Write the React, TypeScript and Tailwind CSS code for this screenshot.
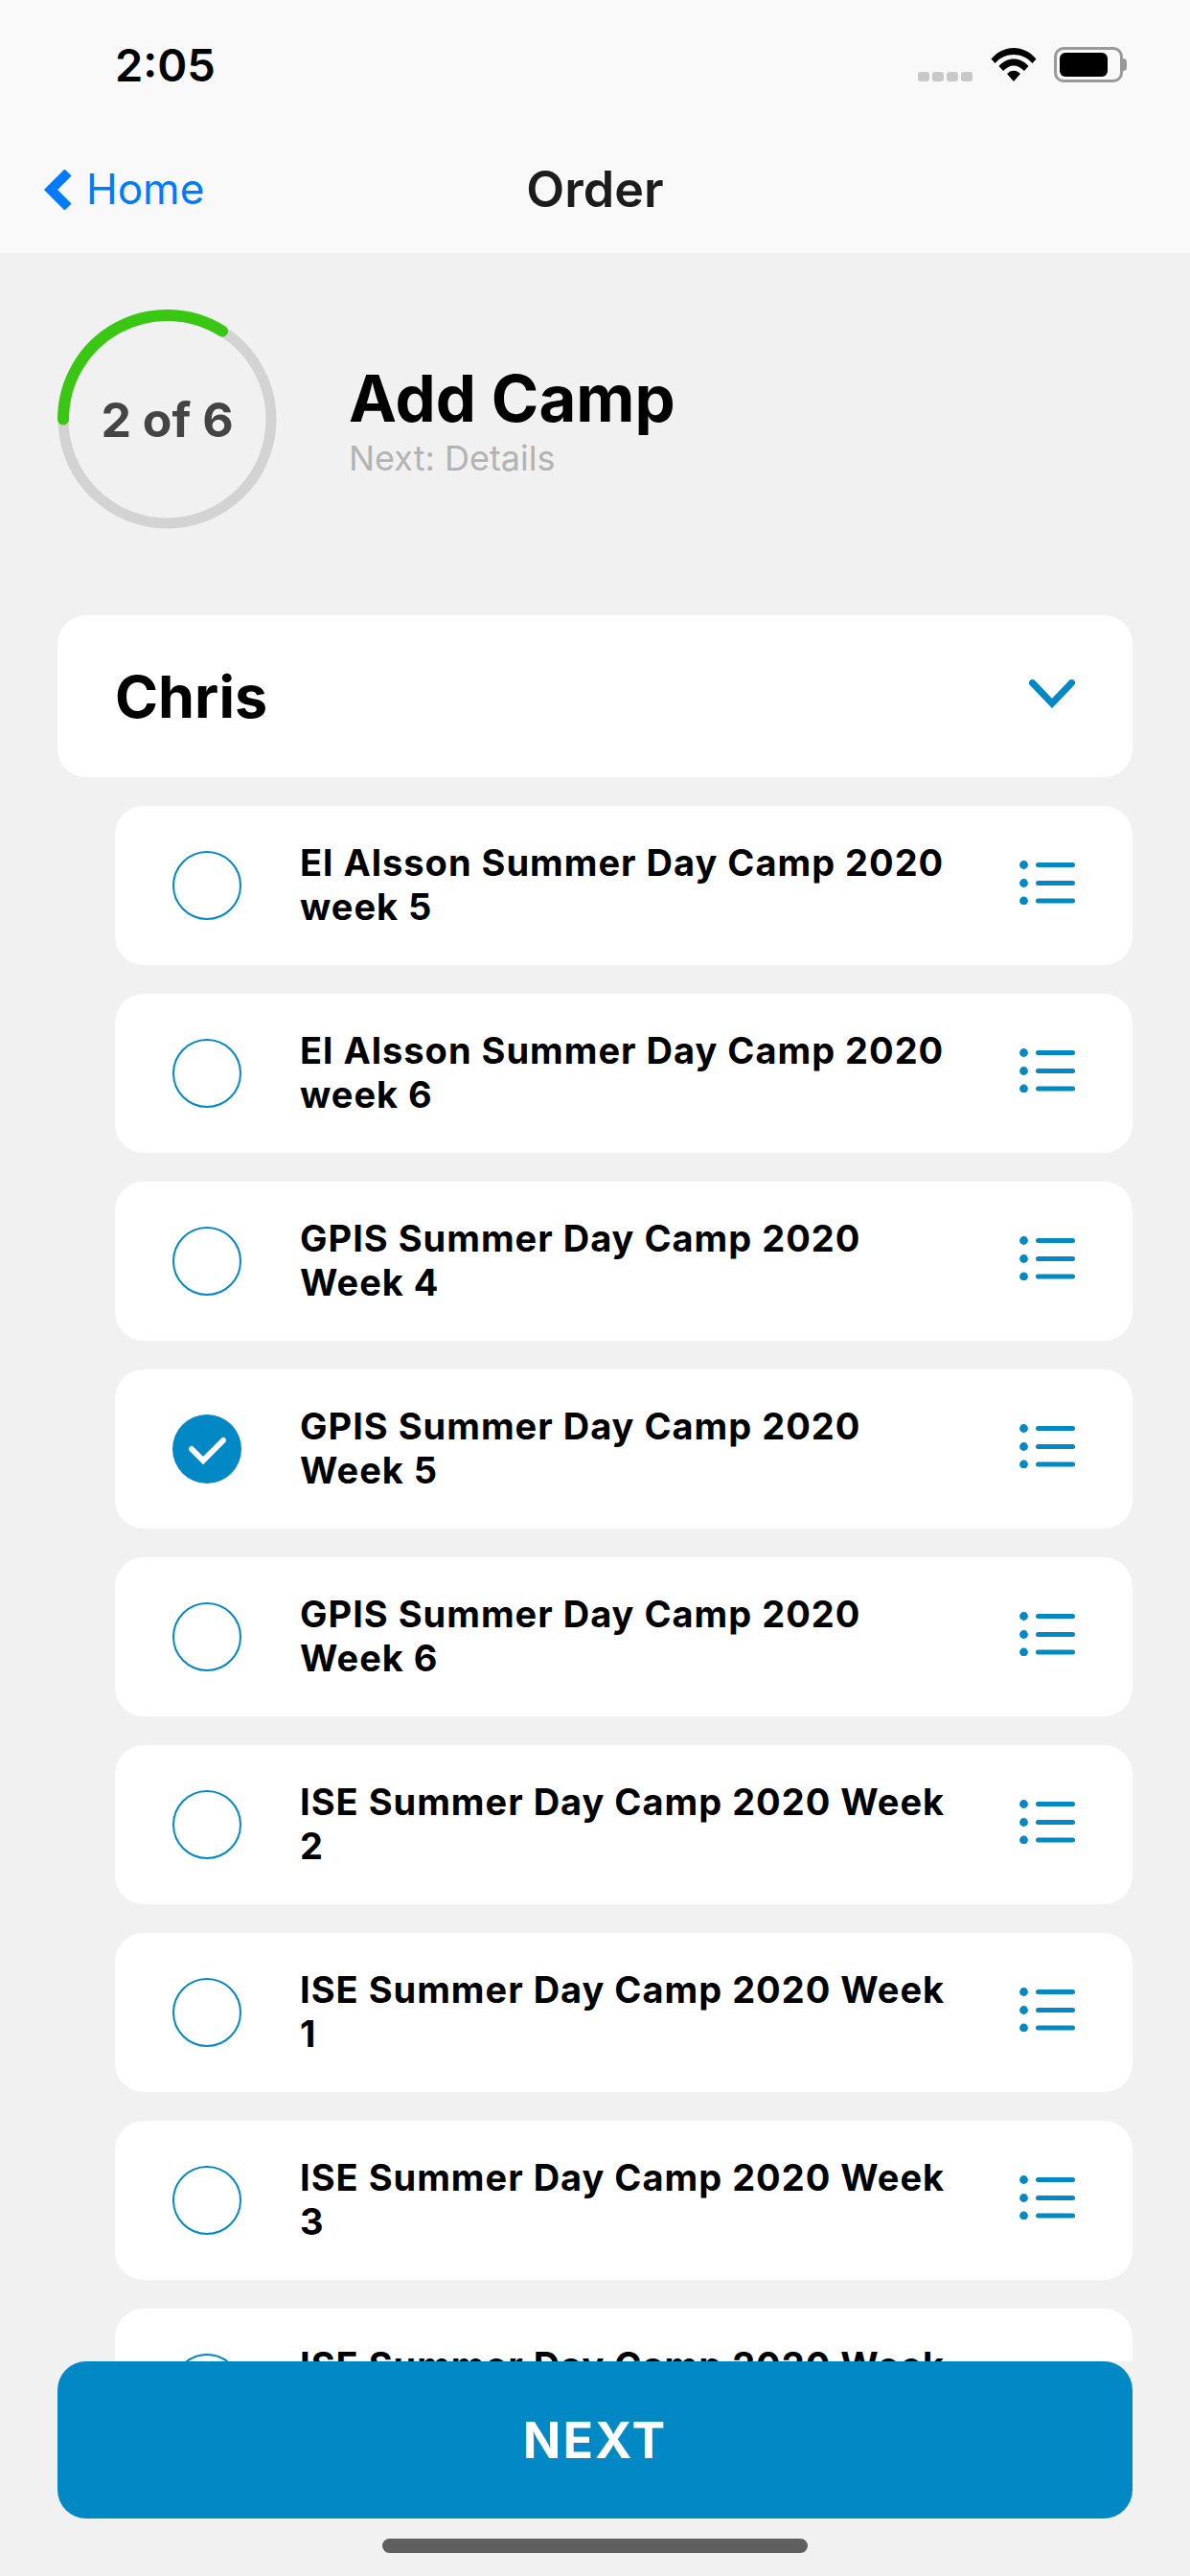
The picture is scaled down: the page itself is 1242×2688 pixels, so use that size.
const items = [
  ["El Alsson Summer Day Camp 2020", "week 5", false],
  ["El Alsson Summer Day Camp 2020", "week 6", false],
  ["GPIS Summer Day Camp 2020", "Week 4", false],
  ["GPIS Summer Day Camp 2020", "Week 5", true],
  ["GPIS Summer Day Camp 2020", "Week 6", false],
  ["ISE Summer Day Camp 2020 Week", "2", false],
  ["ISE Summer Day Camp 2020 Week", "1", false],
  ["ISE Summer Day Camp 2020 Week", "3", false],
  ["ISE Summer Day Camp 2020 Week", "4", false],
] as const;

function ListIcon() {
  return (
    <svg width="58" height="46" viewBox="0 0 58 46" className="shrink-0">
      <g fill="#0288c4">
        <circle cx="4.5" cy="4.5" r="4.4" />
        <circle cx="4.5" cy="23.5" r="4.4" />
        <circle cx="4.5" cy="42" r="4.4" />
      </g>
      <g stroke="#0288c4" strokeWidth="5" strokeLinecap="round">
        <path d="M19.5 4.5H55.5" />
        <path d="M19.5 23.5H55.5" />
        <path d="M19.5 42H55.5" />
      </g>
    </svg>
  );
}

function Radio({ checked }: { checked: boolean }) {
  return checked ? (
    <svg width="72" height="72" viewBox="0 0 72 72" className="shrink-0">
      <circle cx="36" cy="36" r="36" fill="#0288c4" />
      <path d="M20 36L32 48L53 27" fill="none" stroke="#fff" strokeWidth="6" strokeLinecap="round" />
    </svg>
  ) : (
    <div className="w-[72px] h-[72px] rounded-full border-2 border-[#0288c4] shrink-0" />
  );
}

export default function App() {
  return (
    <div
      className="w-[1242px] h-[2688px] overflow-hidden flex flex-col bg-[#f1f1f1] text-black"
      style={{ fontFamily: "Inter, 'Liberation Sans', sans-serif" }}
    >
      <header className="h-[264px] shrink-0 bg-[#f9f9f9] flex flex-col">
        <div className="h-[136px] flex items-start justify-between pt-[40px] pl-[120px] pr-[70px]">
          <span className="text-[47px] leading-[56px] font-semibold">2:05</span>
          <div className="flex items-start pt-[9px]">
            <div className="flex gap-[3px] mt-[26px] mr-[19px]">
              <i className="block w-[12px] h-[10px] rounded-[3px] bg-[#c8c8c8]" />
              <i className="block w-[12px] h-[10px] rounded-[3px] bg-[#c8c8c8]" />
              <i className="block w-[12px] h-[10px] rounded-[3px] bg-[#c8c8c8]" />
              <i className="block w-[12px] h-[10px] rounded-[3px] bg-[#c8c8c8]" />
            </div>
            <svg width="48" height="36" viewBox="0 0 48 36" className="mr-[18px]">
              <path d="M0.5 12.5C13 -3 35 -3 47.5 12.5L43.5 17C33 5 15 5 4.5 17Z" fill="#000" />
              <path d="M8.5 20C17 10 31 10 39.5 20L35 25C28 17.5 20 17.5 13 25Z" fill="#000" />
              <path d="M17 28C21 23.5 27 23.5 31 28L24 36Z" fill="#000" />
            </svg>
            <div className="relative w-[72px] h-[37px] rounded-[10px] border-[3px] border-[#999] p-[3px]">
              <div className="w-[50px] h-[25px] rounded-[6px] bg-black" />
              <span className="absolute left-[69px] top-[9px] w-[4px] h-[13px] rounded-r-[4px] bg-[#999]" />
            </div>
          </div>
        </div>
        <div className="relative flex-1 flex items-start justify-center">
          <div className="absolute left-[43px] top-[40px] flex items-center">
            <svg width="34" height="42" viewBox="0 0 34 42">
              <path d="M28 3L10 21L28 39" fill="none" stroke="#007aff" strokeWidth="10" />
            </svg>
            <span className="ml-[13px] text-[44px] leading-[44px] text-[#007aff] -mt-[1px]">Home</span>
          </div>
          <span className="mt-[32px] text-[52px] leading-[60px] font-semibold text-[#1c1c1c]">Order</span>
        </div>
      </header>

      <section className="flex items-center pl-[60px] mt-[59px] h-[229px] shrink-0">
        <div className="relative w-[229px] h-[229px] flex items-center justify-center shrink-0">
          <svg width="229" height="229" viewBox="0 0 229 229" className="absolute inset-0">
            <circle cx="114.5" cy="114.5" r="108.5" fill="none" stroke="#d3d3d3" strokeWidth="11" />
            <path
              d="M6 114.5A108.5 108.5 0 0 1 172 22.5"
              fill="none"
              stroke="#39c714"
              strokeWidth="12"
              strokeLinecap="round"
            />
          </svg>
          <span className="relative text-[50px] leading-[58px] font-bold text-[#444]">2 of 6</span>
        </div>
        <div className="ml-[75px] mt-[4px] flex flex-col">
          <span className="text-[67px] leading-[72px] font-bold">Add Camp</span>
          <span className="text-[36px] leading-[44px] mt-[4px] text-[#b3b3b3]">Next: Details</span>
        </div>
      </section>

      <main className="flex-1 min-h-0 overflow-hidden mt-[90px] ml-[60px] mr-[60px] flex flex-col">
        <div className="h-[169px] shrink-0 bg-white rounded-[30px] flex items-center justify-between pl-[60px] pr-[60px]">
          <span className="text-[61px] leading-[72px] font-bold">Chris</span>
          <svg width="48" height="30" viewBox="0 0 48 30" className="-mt-[6px]">
            <path d="M3.5 3.5L24 25L44.5 3.5" fill="none" stroke="#0288c4" strokeWidth="7" strokeLinecap="round" />
          </svg>
        </div>
        <ul className="ml-[60px] mt-[30px] flex flex-col gap-[30px]">
          {items.map(([a, b, checked], i) => (
            <li key={i} className="h-[166px] shrink-0 bg-white rounded-[30px] flex items-center pl-[60px] pr-[60px]">
              <Radio checked={checked} />
              <div className="ml-[61px] flex-1 -mt-[2px] text-[38px] leading-[46px] font-bold tracking-[1px] whitespace-nowrap">
                <div>{a}</div>
                <div>{b}</div>
              </div>
              <div className="-mt-[6px]">
                <ListIcon />
              </div>
            </li>
          ))}
        </ul>
      </main>

      <footer className="h-[224px] shrink-0 px-[60px] flex flex-col items-center">
        <button className="w-full h-[164px] rounded-[30px] bg-[#0288c4] text-white text-[52px] font-bold tracking-[2px] pt-[2px]">
          NEXT
        </button>
        <div className="mt-[21px] w-[444px] h-[15px] rounded-full bg-[#5f5f5f]" />
      </footer>
    </div>
  );
}
